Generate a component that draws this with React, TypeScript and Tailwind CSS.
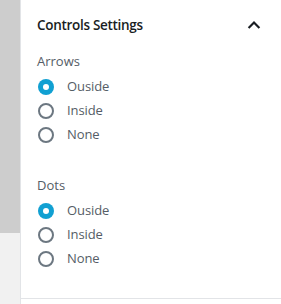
import { useState } from "react";

const options = ["Ouside", "Inside", "None"];

function RadioGroup({ label, value, onChange }: { label: string; value: string; onChange: (v: string) => void }) {
  return (
    <div className="flex flex-col">
      <div className="text-[13px] leading-[20px] text-[#555d66] mb-[6px] mt-[1px]">{label}</div>
      <div className="flex flex-col gap-[4px]">
        {options.map((opt) => {
          const checked = value === opt;
          return (
            <label key={opt} className="flex items-center h-[20px] cursor-pointer">
              <span
                className={
                  checked
                    ? "w-[16px] h-[16px] rounded-full bg-[#11a0d2] flex items-center justify-center ml-[1px]"
                    : "w-[16px] h-[16px] rounded-full border-2 border-[#6c7781] ml-[1px]"
                }
              >
                {checked && <span className="w-[6px] h-[6px] rounded-full bg-white" />}
              </span>
              <input type="radio" className="hidden" checked={checked} onChange={() => onChange(opt)} />
              <span className="ml-[13px] text-[13px] text-[#555d66] tracking-[-0.1px]">{opt}</span>
            </label>
          );
        })}
      </div>
    </div>
  );
}

export default function App() {
  const [arrows, setArrows] = useState("Ouside");
  const [dots, setDots] = useState("Ouside");

  return (
    <div className="flex w-[281px] h-[304px] bg-white font-['Open_Sans',sans-serif] overflow-hidden">
      <div className="w-[21px] flex flex-col bg-[#f1f1f1] border-r border-[#e2e4e7]">
        <div className="h-[233px] bg-[#cdcdcd]" />
      </div>
      <div className="flex-1 flex flex-col">
        <div className="h-[299px] border-b border-[#e2e4e7] px-[16px]">
          <div className="flex items-center justify-between h-[48px] pt-[2px]">
            <span className="text-[13.5px] font-semibold text-[#191e23] tracking-[-0.3px]">Controls Settings</span>
            <svg width="20" height="20" viewBox="0 0 24 24" className="mr-[1px]">
              <path d="M5.5 15.5l6.5-6.5 6.5 6.5" fill="none" stroke="#191e23" strokeWidth="2.6" />
            </svg>
          </div>
          <div className="flex flex-col gap-[29px] mt-[2px]">
            <RadioGroup label="Arrows" value={arrows} onChange={setArrows} />
            <RadioGroup label="Dots" value={dots} onChange={setDots} />
          </div>
        </div>
      </div>
    </div>
  );
}
